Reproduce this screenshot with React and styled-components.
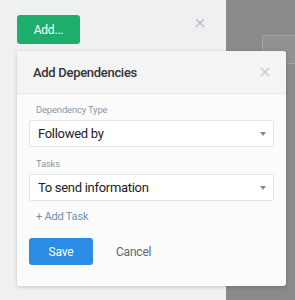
import React from "react"
import styled, { createGlobalStyle } from "styled-components"

const GlobalStyle = createGlobalStyle`
  html, body {
    margin: 0;
    padding: 0;
    width: 295px;
    height: 300px;
    overflow: hidden;
    font-family: Roboto, "Liberation Sans", Arial, sans-serif;
  }
`

const Page = styled.div`
  position: relative;
  display: flex;
  width: 295px;
  height: 300px;
`

const SidePanel = styled.div`
  width: 226px;
  background: #eef0f2;
  box-sizing: border-box;
  padding: 15px 17px 0;
`

const PanelTop = styled.div`
  display: flex;
  justify-content: space-between;
  align-items: flex-start;
`

const AddButton = styled.button`
  width: 63px;
  height: 29px;
  border: none;
  border-radius: 3px;
  background: #1eae6c;
  color: #fff;
  font-family: inherit;
  font-size: 12px;
  letter-spacing: -0.2px;
  padding: 0;
`

const CloseX = styled.span`
  display: flex;
  align-items: center;
  justify-content: center;
  width: 14px;
  height: 14px;
  margin-top: ${p => p.$top || 0}px;
  margin-right: ${p => p.$right || 0}px;
`

const Backdrop = styled.div`
  flex: 1;
  background: #8a8a8a;
  padding-top: 35px;
  padding-left: 36px;
`

const GhostBox = styled.div`
  height: 27px;
  border: 1px solid #a3a3a3;
  border-right: none;
  border-radius: 2px 0 0 2px;
  background: #919191;
`

const Modal = styled.div`
  position: absolute;
  left: 17px;
  top: 51px;
  width: 269px;
  height: 235px;
  background: #fbfbfb;
  border-radius: 3px;
  box-shadow: 0 1px 4px rgba(0, 0, 0, 0.18);
  overflow: hidden;
`

const ModalHeader = styled.div`
  display: flex;
  align-items: center;
  justify-content: space-between;
  height: 42px;
  padding: 0 16px;
  background: #f3f4f4;
  border-bottom: 1px solid #e6e7e8;
`

const Title = styled.div`
  font-size: 13px;
  letter-spacing: -0.3px;
  font-weight: 500;
  color: #333;
`

const ModalBody = styled.div`
  padding: 9px 12px 0;
`

const FieldLabel = styled.div`
  font-size: 9.5px;
  letter-spacing: -0.2px;
  color: #8c98a4;
  padding-left: 7px;
  height: 14px;
  line-height: 14px;
  margin-bottom: 3px;
`

const Select = styled.div`
  display: flex;
  align-items: center;
  justify-content: space-between;
  height: 27px;
  box-sizing: border-box;
  padding: 0 7px 0 8px;
  background: #fff;
  border: 1px solid #e2e4e6;
  border-radius: 2px;
  font-size: 13px;
  letter-spacing: -0.3px;
  color: #222;
  margin-bottom: ${p => p.$gap || 0}px;
`

const Caret = styled.span`
  width: 0;
  height: 0;
  border-left: 3.5px solid transparent;
  border-right: 3.5px solid transparent;
  border-top: 4px solid #888;
`

const AddTask = styled.div`
  font-size: 11px;
  letter-spacing: -0.2px;
  color: #6f8fae;
  padding-left: 7px;
  margin-top: 9px;
  height: 14px;
  line-height: 14px;
`

const Actions = styled.div`
  display: flex;
  align-items: center;
  margin-top: 14px;
`

const SaveButton = styled.button`
  width: 64px;
  height: 27px;
  border: none;
  border-radius: 3px;
  background: #2b8ce6;
  color: #fff;
  font-family: inherit;
  font-size: 12px;
  letter-spacing: -0.2px;
  padding: 0;
`

const CancelButton = styled.button`
  border: none;
  background: none;
  font-family: inherit;
  font-size: 12px;
  letter-spacing: -0.2px;
  color: #666;
  margin-left: 23px;
  padding: 0;
`

const XIcon = ({ color }) => (
  <svg width="10" height="10" viewBox="0 0 10 10">
    <path d="M1 1L9 9M9 1L1 9" stroke={color} strokeWidth="1.1" />
  </svg>
)

export default function App() {
  return (
    <Page>
      <GlobalStyle />
      <SidePanel>
        <PanelTop>
          <AddButton>Add...</AddButton>
          <CloseX $top={1} $right={2}>
            <XIcon color="#b5b8bb" />
          </CloseX>
        </PanelTop>
      </SidePanel>
      <Backdrop>
        <GhostBox />
      </Backdrop>
      <Modal>
        <ModalHeader>
          <Title>Add Dependencies</Title>
          <CloseX $right={-2}>
            <XIcon color="#c2c4c6" />
          </CloseX>
        </ModalHeader>
        <ModalBody>
          <FieldLabel>Dependency Type</FieldLabel>
          <Select $gap={10}>
            Followed by
            <Caret />
          </Select>
          <FieldLabel>Tasks</FieldLabel>
          <Select>
            To send information
            <Caret />
          </Select>
          <AddTask>+ Add Task</AddTask>
          <Actions>
            <SaveButton>Save</SaveButton>
            <CancelButton>Cancel</CancelButton>
          </Actions>
        </ModalBody>
      </Modal>
    </Page>
  )
}
